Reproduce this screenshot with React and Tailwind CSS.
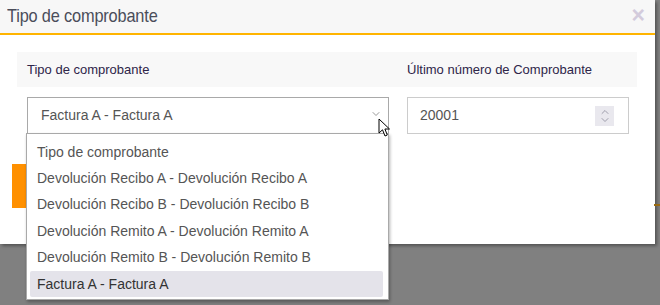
import { ChevronDown, ChevronUp } from 'lucide-react'

const options = [
  'Tipo de comprobante',
  'Devolución Recibo A - Devolución Recibo A',
  'Devolución Recibo B - Devolución Recibo B',
  'Devolución Remito A - Devolución Remito A',
  'Devolución Remito B - Devolución Remito B',
  'Factura A - Factura A',
]

function Cursor() {
  return (
    <svg width="13" height="20" viewBox="0 0 13 20" className="absolute left-[378px] top-[118px]">
      <path d="M1 1 L1 15 L4.5 11.8 L7 18 L9.3 17 L6.9 11 L11.5 11 Z" fill="#fff" stroke="#000" strokeWidth="1" strokeLinejoin="round" />
    </svg>
  )
}

export default function App() {
  return (
    <div className="relative h-[305px] w-[660px] overflow-hidden bg-[#808080] font-['Liberation_Sans',Arial,sans-serif]">
      <div className="absolute right-0 top-[204px] h-[2px] w-[6px] bg-[#9a6a10]" />
      <div className="h-[244px] w-[655px] bg-white shadow-[2px_2px_3px_rgba(0,0,0,0.35)]">
        <div className="flex h-[35px] items-center justify-between border-b-2 border-[#ffb400] bg-[#f7f7f7] pl-[7px] pr-[10px]">
          <span className="origin-left scale-x-[0.86] font-['Liberation_Sans',sans-serif] text-[19px] tracking-[-0.2px] text-[#4a4d5a]">
            Tipo de comprobante
          </span>
          <span className="-mt-[2px] text-[23px] font-bold leading-none text-[#d3cbdc]">×</span>
        </div>
        <div className="pl-[12px] pt-[17px]">
          <div className="ml-[5px] flex h-[35px] w-[620px] items-center bg-[#f8f8f8] text-[13px] text-[#2e2548]">
            <span className="w-[390px] pl-[10px]">Tipo de comprobante</span>
            <span>Último número de Comprobante</span>
          </div>
          <div className="ml-[15px] mt-[10px] flex gap-[18px]">
            <div className="flex h-[37px] w-[362px] items-center justify-between border border-[#a9a9a9] pl-[13px] pr-[6px] text-[14px] text-[#555]">
              <span>Factura A - Factura A</span>
              <ChevronDown size={12} strokeWidth={1.5} className="-mt-[3px] text-[#777]" />
            </div>
            <div className="flex h-[37px] w-[222px] items-center justify-between border border-[#cccccc] pl-[12px] pr-[14px] text-[14px] text-[#555]">
              <span>20001</span>
              <div className="flex h-[20px] w-[19px] flex-col items-center justify-center bg-[#e9e8ee] text-[#8a8a99]">
                <ChevronUp size={12} strokeWidth={1.6} className="-mb-[2px]" />
                <ChevronDown size={12} strokeWidth={1.6} className="-mt-[2px]" />
              </div>
            </div>
          </div>
          <div className="mt-[30px] h-[44px] w-[60px] bg-[#ff9000]" />
        </div>
      </div>
      <div className="absolute left-[26px] top-[133px] w-[363px] border border-[#a9a9a9] bg-white pb-[2px] pl-[3px] pr-[5px] pt-[5px] text-[14px] text-[#555] shadow-[1px_2px_3px_rgba(0,0,0,0.3)]">
        {options.map((o, i) => (
          <div
            key={o}
            className={`flex h-[26.4px] items-center pl-[7px] ${i === options.length - 1 ? 'rounded-[2px] bg-[#e4e3ea] text-[#333]' : ''}`}
          >
            {o}
          </div>
        ))}
      </div>
      <Cursor />
    </div>
  )
}
